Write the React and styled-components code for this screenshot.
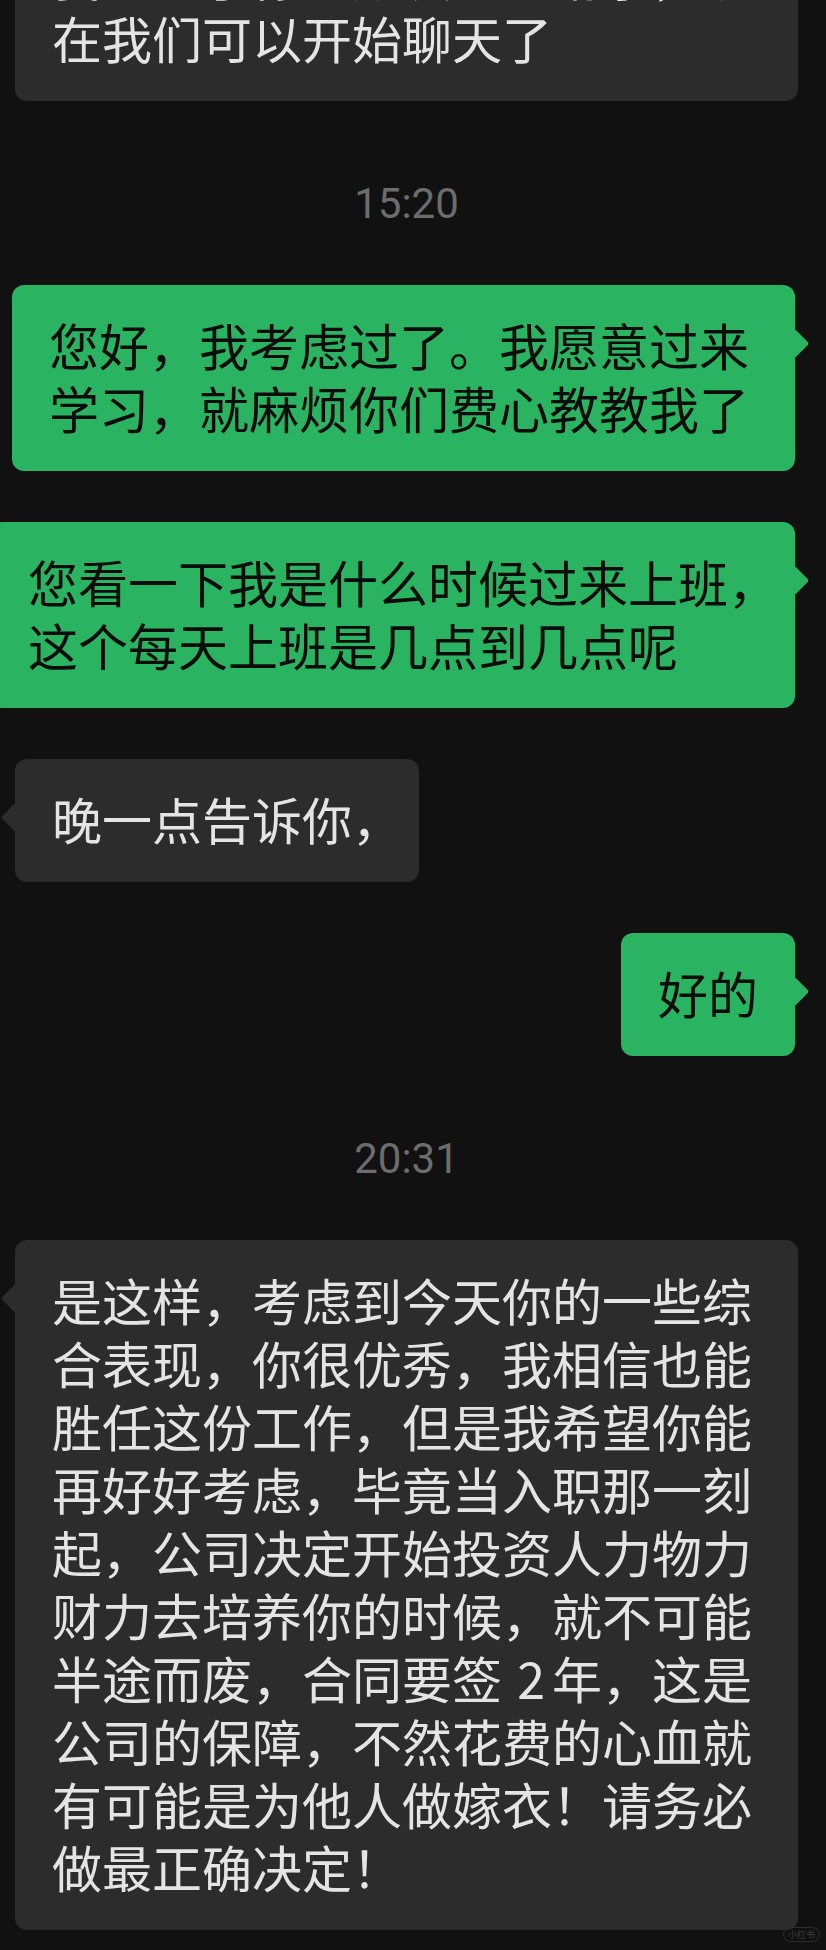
import React from 'react';
import styled, { createGlobalStyle, css } from 'styled-components';

const GlobalStyle = createGlobalStyle`
  html, body {
    margin: 0;
    padding: 0;
    background: #111111;
  }
`;

const conversation = [
  { side: 'left', lines: ['我通过了你的朋友验证请求，现', '在我们可以开始聊天了'] },
  { time: '15:20' },
  { side: 'right', lines: ['您好，我考虑过了。我愿意过来', '学习，就麻烦你们费心教教我了'] },
  { side: 'right', lines: ['您看一下我是什么时候过来上班，', '这个每天上班是几点到几点呢'] },
  { side: 'left', lines: ['晚一点告诉你，'] },
  { side: 'right', lines: ['好的'] },
  { time: '20:31' },
  {
    side: 'left',
    lines: [
      '是这样，考虑到今天你的一些综',
      '合表现，你很优秀，我相信也能',
      '胜任这份工作，但是我希望你能',
      '再好好考虑，毕竟当入职那一刻',
      '起，公司决定开始投资人力物力',
      '财力去培养你的时候，就不可能',
      '半途而废，合同要签2年，这是',
      '公司的保障，不然花费的心血就',
      '有可能是为他人做嫁衣！请务必',
      '做最正确决定！',
    ],
  },
];

// trailing comma is squeezed like the phone does at a line end
const renderLine = (line) => {
  const endsWithComma = line.endsWith('，');
  const body = endsWithComma ? line.slice(0, -1) : line;
  const parts = body.split(/(\d+)/).map((part, i) =>
    /^\d+$/.test(part) ? <Num key={i}>{part}</Num> : part
  );
  return (
    <>
      {parts}
      {endsWithComma && <EndPunct>，</EndPunct>}
    </>
  );
};

const App = () => (
  <>
    <GlobalStyle />
    <Screen>
      <Chat>
        {conversation.map((item, idx) =>
          item.time ? (
            <Stamp key={idx}>{item.time}</Stamp>
          ) : (
            <Row key={idx} $side={item.side}>
              <Bubble $side={item.side} $multi={item.lines.length > 1}>
                {item.lines.map((line, i) => (
                  <Line key={i}>{renderLine(line)}</Line>
                ))}
              </Bubble>
            </Row>
          )
        )}
      </Chat>
      <Watermark>小红书</Watermark>
    </Screen>
  </>
);

const Screen = styled.main`
  position: relative;
  width: 826px;
  height: 1950px;
  overflow: hidden;
  background: #111111;
  font-family: 'Noto Sans CJK SC', 'Noto Sans', sans-serif;
`;

const Chat = styled.div`
  display: flex;
  flex-direction: column;
  margin-top: -85px;
  padding: 0 28px 0 15px;
`;

const Row = styled.div`
  display: flex;
  justify-content: ${(p) => (p.$side === 'right' ? 'flex-end' : 'flex-start')};
  padding-right: ${(p) => (p.$side === 'right' ? '3px' : '0')};

  & + & {
    margin-top: 51px;
  }
`;

const Stamp = styled.div`
  margin: 78px 0 56px;
  height: 50px;
  line-height: 50px;
  text-align: center;
  font-family: Roboto, 'Liberation Sans', sans-serif;
  font-size: 42px;
  color: #6c6c6c;
`;

const tailLeft = css`
  left: -10px;
`;

const tailRight = css`
  right: -10px;
`;

const Bubble = styled.div`
  position: relative;
  flex-shrink: 0;
  box-sizing: border-box;
  min-width: ${(p) => (p.$multi ? '783px' : 'auto')};
  padding: 28px 37px 32px;
  border-radius: 12px;
  font-size: 50px;
  line-height: 63px;
  background: ${(p) => (p.$side === 'right' ? '#2ab462' : '#2c2c2c')};
  color: ${(p) => (p.$side === 'right' ? '#0c0c0c' : '#e4e4e4')};

  &::before {
    content: '';
    position: absolute;
    top: 48px;
    width: 21px;
    height: 21px;
    border-radius: 3px;
    background: inherit;
    transform: rotate(45deg);
    ${(p) => (p.$side === 'right' ? tailRight : tailLeft)}
  }
`;

const Line = styled.span`
  position: relative;
  display: block;
  white-space: nowrap;
`;

const EndPunct = styled.span`
  display: inline-block;
  width: 30px;
  overflow: visible;
`;

const Num = styled.span`
  display: inline-block;
  width: 50px;
  padding-left: 8px;
  box-sizing: border-box;
  text-align: center;
`;

const Watermark = styled.div`
  position: absolute;
  right: 6px;
  bottom: 8px;
  font-size: 9px;
  color: #3a3a3a;
  border: 1px solid #2e2e2e;
  border-radius: 8px;
  padding: 0 4px;
`;

export default App;
